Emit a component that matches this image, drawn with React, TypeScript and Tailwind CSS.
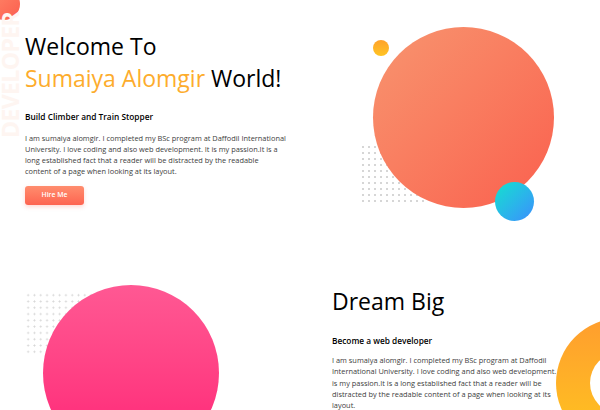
import React from "react";

const lines1 = [
  "I am sumaiya alomgir. I completed my BSc program at Daffodil International",
  "University. I love coding and also web development. It is my passion.It is a",
  "long established fact that a reader will be distracted by the readable",
  "content of a page when looking at its layout.",
];

const lines2 = [
  "I am sumaiya alomgir. I completed my BSc program at Daffodil",
  "International University. I love coding and also web development. It",
  "is my passion.It is a long established fact that a reader will be",
  "distracted by the readable content of a page when looking at its",
  "layout.",
];

function Para({ lines, className }: { lines: string[]; className: string }) {
  return (
    <p className={className}>
      {lines.map((l, i) => (
        <React.Fragment key={i}>
          {l}
          {i < lines.length - 1 && <br />}
        </React.Fragment>
      ))}
    </p>
  );
}

export default function App() {
  return (
    <div className="relative w-[600px] h-[410px] overflow-hidden bg-white font-['Open_Sans',sans-serif] text-black">
      {/* corner blob */}
      <div className="absolute -left-[12px] -top-[12px] w-[32px] h-[32px] rounded-full bg-gradient-to-br from-[#ff8a6b] to-[#fb5d4e]" />
      {/* vertical DEVELOPER */}
      <div className="absolute left-[-50px] top-[66px] w-[120px] h-[24px] -rotate-90 text-center text-[23px] font-bold tracking-[-0.6px] leading-[24px] text-[#fef5f1]">
        DEVELOPER
      </div>

      {/* Section 1 */}
      <section className="flex h-[262px]">
        <div className="relative w-[320px] pl-[25px] pt-[30px]">
          <h1 className="text-[23px] font-medium leading-[32px]">
            Welcome To
            <br />
            <span className="text-[#fdac2c]">Sumaiya Alomgir</span> World!
          </h1>
          <h3 className="mt-[17px] text-[8.3px] font-semibold leading-[12px]">Build Climber and Train Stopper</h3>
          <Para lines={lines1} className="mt-[10px] whitespace-nowrap text-[7.4px] leading-[11px] text-[#3d3d3d]" />
          <button className="mt-[9px] h-[19px] w-[59px] rounded-[3px] bg-gradient-to-b from-[#ff8d6e] to-[#fd6350] text-[6.8px] font-semibold text-white shadow-[0_2px_4px_rgba(253,99,80,0.25)]">
            Hire Me
          </button>
        </div>
        <div className="relative flex-1">
          <div className="absolute left-[40px] top-[144px] w-[66px] h-[62px] bg-[radial-gradient(circle,#d6d6d6_0.8px,transparent_1.1px)] bg-[length:6px_6px]" />
          <div className="absolute left-[53px] top-[27px] w-[181px] h-[181px] rounded-full bg-gradient-to-br from-[#f7946f] to-[#fa5f4e]" />
          <div className="absolute left-[53px] top-[40px] w-[16px] h-[16px] rounded-full bg-gradient-to-b from-[#ffa22a] to-[#ffc422]" />
          <div className="absolute left-[175px] top-[182px] w-[39px] h-[39px] rounded-full bg-gradient-to-br from-[#14e0cc] to-[#3b8dfd]" />
        </div>
      </section>

      {/* Section 2 */}
      <section className="flex h-[148px]">
        <div className="relative w-[332px]">
          <div className="absolute left-[25px] top-[30px] w-[72px] h-[62px] bg-[radial-gradient(circle,#d6d6d6_0.8px,transparent_1.1px)] bg-[length:6.3px_6.3px]" />
          <div className="absolute left-[43px] top-[23px] w-[176px] h-[176px] rounded-full bg-gradient-to-b from-[#ff5893] to-[#ff1a75]" />
        </div>
        <div className="flex-1 pt-[23px]">
          <h2 className="text-[23px] font-medium leading-[32px]">Dream Big</h2>
          <h3 className="mt-[18px] text-[8.3px] font-semibold leading-[12px]">Become a web developer</h3>
          <Para lines={lines2} className="mt-[8px] whitespace-nowrap text-[7.4px] leading-[11.3px] text-[#3d3d3d]" />
        </div>
        <div className="absolute left-[556px] top-[318px] w-[130px] h-[130px] rounded-full bg-gradient-to-b from-[#ff9d2e] to-[#ffc61c] p-[34px]">
          <div className="h-full w-full rounded-full bg-white" />
        </div>
      </section>
    </div>
  );
}
